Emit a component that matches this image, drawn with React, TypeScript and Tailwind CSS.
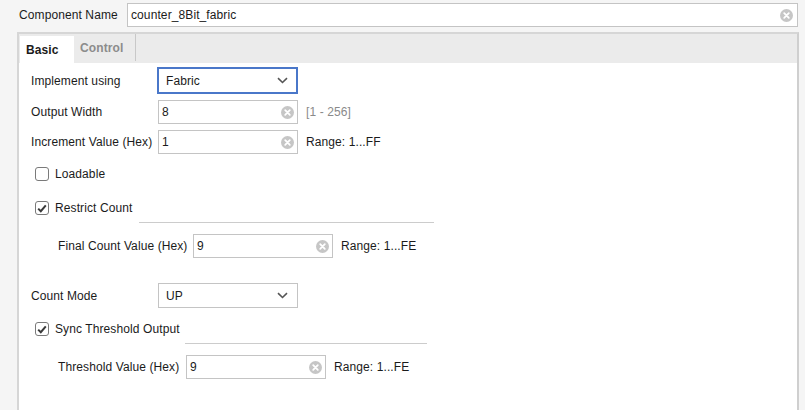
import React from "react"

function ClearIcon() {
  return (
    <svg width="13" height="13" viewBox="0 0 13 13" className="shrink-0">
      <circle cx="6.5" cy="6.5" r="6.5" fill="#c6c6c6" />
      <path d="M4.2 4.2 L8.8 8.8 M8.8 4.2 L4.2 8.8" stroke="#fff" strokeWidth="1.8" strokeLinecap="round" />
    </svg>
  )
}

function Chevron() {
  return (
    <svg width="11" height="7" viewBox="0 0 11 7" className="shrink-0">
      <path d="M1 1.2 L5.5 5.5 L10 1.2" fill="none" stroke="#555" strokeWidth="1.6" />
    </svg>
  )
}

function Check({ checked }: { checked?: boolean }) {
  return (
    <div className="w-[14px] h-[14px] rounded-[3px] border border-[#7a7a7a] bg-white flex items-center justify-center shrink-0">
      {checked && (
        <svg width="10" height="9" viewBox="0 0 10 9">
          <path d="M1.2 4.6 L3.8 7.2 L8.8 1.4" fill="none" stroke="#3a3a3a" strokeWidth="2" />
        </svg>
      )}
    </div>
  )
}

function TextBox({ value }: { value: string }) {
  return (
    <div className="w-[140px] h-[24px] shrink-0 border border-[#c4c4c4] bg-white flex items-center pl-[3px] pr-[3px]">
      <span className="flex-1">{value}</span>
      <ClearIcon />
    </div>
  )
}

function Select({ value, focused }: { value: string; focused?: boolean }) {
  return (
    <div
      className={
        focused
          ? "w-[141px] h-[27px] border-2 border-[#4a77c9] bg-white flex items-center pl-[7px] pr-[8px]"
          : "w-[140px] h-[25px] border border-[#c4c4c4] bg-white flex items-center pl-[7px] pr-[9px]"
      }
    >
      <span className="flex-1">{value}</span>
      <Chevron />
    </div>
  )
}

function CheckRow({ label, checked, className }: { label: string; checked?: boolean; className: string }) {
  return (
    <div className={`flex items-center gap-[6px] h-[20px] pl-[4px] ${className}`}>
      <Check checked={checked} />
      <span>{label}</span>
    </div>
  )
}

export default function App() {
  return (
    <div
      className="w-[805px] h-[410px] bg-[#f5f5f5] overflow-hidden text-[12px] tracking-[0.1px] text-[#1b1b1b]"
      style={{ fontFamily: '"Liberation Sans", Arial, sans-serif' }}
    >
      <div className="flex items-center h-[24px] mt-[3px] pl-[19px]">
        <span className="w-[108px]">Component Name</span>
        <div className="w-[671px] h-[24px] border border-[#c4c4c4] bg-white flex items-center pl-[3px] pr-[4px]">
          <span className="flex-1">counter_8Bit_fabric</span>
          <ClearIcon />
        </div>
      </div>

      <div className="ml-[17px] mt-[5px] w-[782px] h-[400px] border-2 border-[#d6d6d6] border-r-[#cfcfcf] bg-white">
        <div className="h-[29px] bg-[#ebebeb] flex items-end pl-px">
          <div className="w-[54px] h-[27px] bg-white flex items-center pl-[6px] font-bold">Basic</div>
          <div className="w-[62px] h-[27px] flex items-center pl-[6px] font-bold text-[#8c8c8c] border-r border-[#c8c8c8] mb-[2px]">
            Control
          </div>
        </div>

        <div className="pl-[12px] pt-[4px]">
          <div className="flex items-center h-[27px]">
            <span className="w-[126px]">Implement using</span>
            <Select value="Fabric" focused />
          </div>

          <div className="flex items-center mt-[6px]">
            <span className="w-[127px]">Output Width</span>
            <TextBox value="8" />
            <span className="ml-[8px] text-[#8a8a8a]">[1 - 256]</span>
          </div>

          <div className="flex items-center mt-[6px]">
            <span className="w-[127px]">Increment Value (Hex)</span>
            <TextBox value="1" />
            <span className="ml-[8px]">Range: 1...FF</span>
          </div>

          <CheckRow label="Loadable" className="mt-[10px]" />
          <CheckRow label="Restrict Count" checked className="mt-[14px]" />
          <div className="ml-[108px] mt-[4px] w-[295px] h-px bg-[#cccccc]" />

          <div className="flex items-center pl-[27px] mt-[11px]">
            <span className="w-[135px]">Final Count Value (Hex)</span>
            <TextBox value="9" />
            <span className="ml-[8px]">Range: 1...FE</span>
          </div>

          <div className="flex items-center mt-[25px]">
            <span className="w-[127px]">Count Mode</span>
            <Select value="UP" />
          </div>

          <CheckRow label="Sync Threshold Output" checked className="mt-[11px]" />
          <div className="ml-[154px] mt-[4px] w-[242px] h-px bg-[#cccccc]" />

          <div className="flex items-center pl-[27px] mt-[11px]">
            <span className="w-[128px]">Threshold Value (Hex)</span>
            <TextBox value="9" />
            <span className="ml-[8px]">Range: 1...FE</span>
          </div>
        </div>
      </div>
    </div>
  )
}
